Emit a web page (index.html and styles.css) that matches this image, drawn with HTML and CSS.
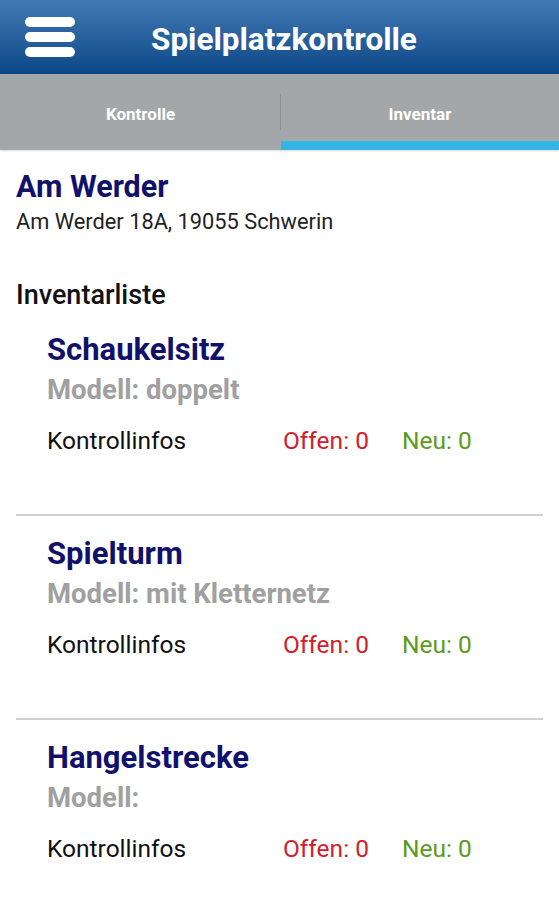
FILE: index.html
```html
<html>
    <head>
        <title>Spielplatzkontrolle</title>
        <link rel="stylesheet" href="styles.css">
    </head>
    <body>
        <div class="topbar">
            <div class="burger">
                <span></span>
                <span></span>
                <span></span>
            </div>
            <span class="apptitle">Spielplatzkontrolle</span>
        </div>

        <div class="tabs">
            <div class="tab">Kontrolle</div>
            <div class="tab active">Inventar</div>
        </div>

        <div class="content">
            <div class="place">Am Werder</div>
            <div class="address">Am Werder 18A, 19055 Schwerin</div>

            <div class="listhead">Inventarliste</div>

            <div class="item">
                <div class="itemname">Schaukelsitz</div>
                <div class="model">Modell: doppelt</div>
                <div class="info">
                    <span>Kontrollinfos</span>
                    <span class="open">Offen: 0</span>
                    <span class="new">Neu: 0</span>
                </div>
            </div>

            <div class="item">
                <div class="itemname">Spielturm</div>
                <div class="model">Modell: mit Kletternetz</div>
                <div class="info">
                    <span>Kontrollinfos</span>
                    <span class="open">Offen: 0</span>
                    <span class="new">Neu: 0</span>
                </div>
            </div>

            <div class="item">
                <div class="itemname">Hangelstrecke</div>
                <div class="model">Modell:</div>
                <div class="info">
                    <span>Kontrollinfos</span>
                    <span class="open">Offen: 0</span>
                    <span class="new">Neu: 0</span>
                </div>
            </div>
        </div>
    </body>
</html>
```

FILE: styles.css
```css
body {
    margin: 0;
    font-family: Roboto, "Liberation Sans", sans-serif;
    background: #ffffff;
    width: 559px;
    height: 900px;
    overflow: hidden;
}

.topbar {
    height: 74px;
    display: flex;
    align-items: center;
    padding-left: 25px;
    background: linear-gradient(#4279b4, #0c4886);
}

.burger {
    width: 50px;
    display: flex;
    flex-direction: column;
    gap: 5px;
}

.burger span {
    height: 10px;
    border-radius: 5px;
    background: #ffffff;
}

.apptitle {
    margin-left: 76px;
    padding-top: 5px;
    color: #ffffff;
    font-size: 31.5px;
    font-weight: bold;
}

.tabs {
    height: 76px;
    display: grid;
    grid-template-columns: 281px 1fr;
    background: #a3a7aa;
    box-shadow: 0 1px 2px rgba(0, 0, 0, 0.15);
}

.tab {
    display: flex;
    align-items: center;
    justify-content: center;
    color: #ffffff;
    font-size: 17px;
    font-weight: bold;
    padding-top: 3px;
}

.tab:first-child {
    background: linear-gradient(#8e9295, #8e9295) no-repeat right 20px / 1px 36px;
}

.tab.active {
    border-bottom: 9px solid #35b5e4;
    padding-top: 12px;
}

.content {
    padding: 20px 16px 0 16px;
}

.place {
    color: #11116c;
    font-size: 30.5px;
    font-weight: bold;
    line-height: 34px;
}

.address {
    margin-top: 6px;
    color: #222222;
    font-size: 21.8px;
    line-height: 24px;
}

.listhead {
    margin-top: 46px;
    margin-bottom: 2px;
    color: #111111;
    font-size: 27px;
    font-weight: 500;
    line-height: 30px;
}

.item {
    padding: 21px 0 59px 31px;
    border-bottom: 2px solid #d0d0d0;
}

.itemname {
    color: #11116c;
    font-size: 31px;
    font-weight: bold;
    line-height: 34px;
}

.model {
    margin-top: 8px;
    color: #a0a0a0;
    font-size: 27.5px;
    font-weight: bold;
    line-height: 30px;
}

.info {
    margin-top: 22px;
    display: grid;
    grid-template-columns: 236px 119px auto;
    color: #111111;
    font-size: 24.5px;
    line-height: 28px;
}

.open {
    color: #d1202b;
}

.new {
    color: #5c9a1d;
}
```
